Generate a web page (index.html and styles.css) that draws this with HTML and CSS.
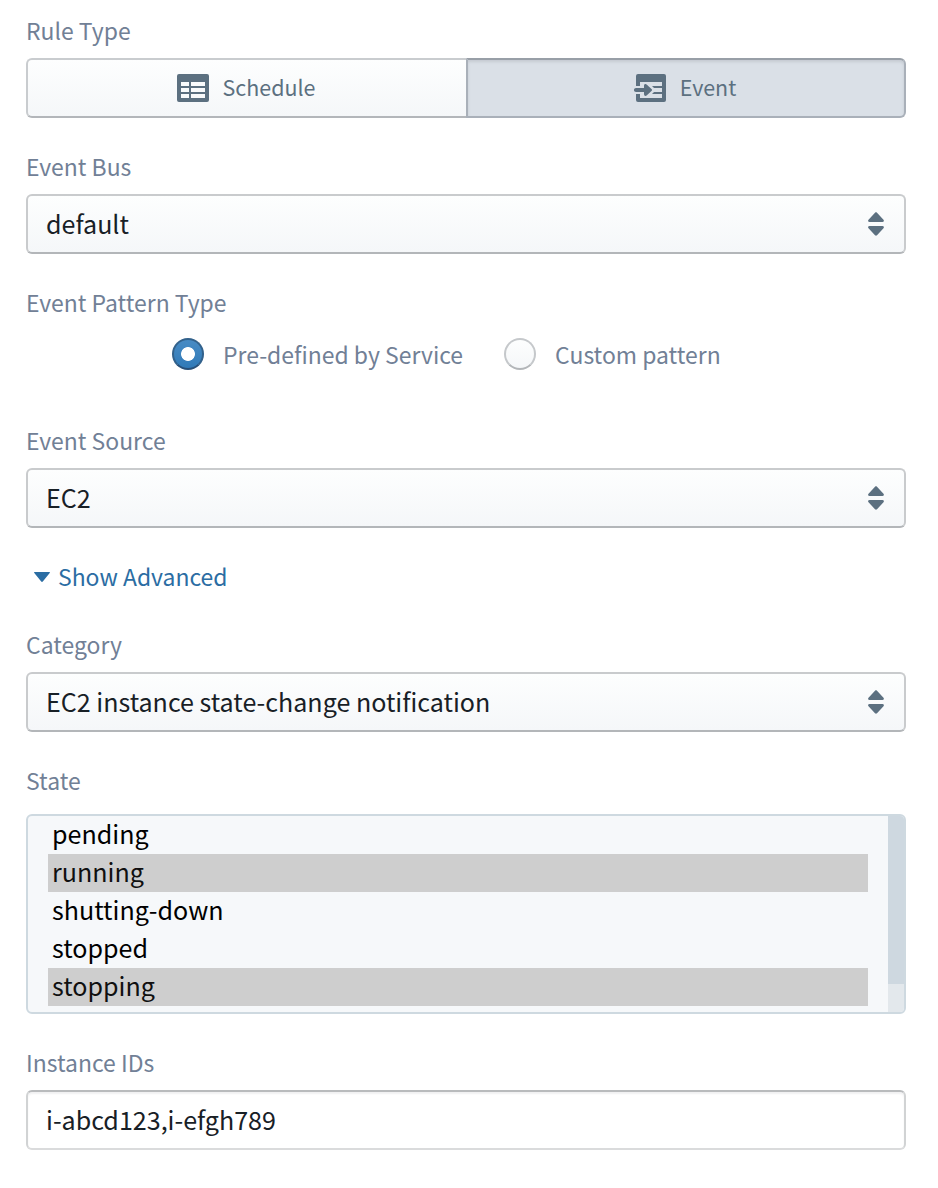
FILE: index.html
```
<!DOCTYPE html>
<html lang="en">
<head>
<meta charset="utf-8">
<title>Event rule</title>
<link rel="stylesheet" href="styles.css">
</head>
<body>
<svg class="sprite" aria-hidden="true">
  <symbol id="carets" viewBox="0 0 18 26">
    <path d="M2.500 11h13c1.300 0 1.900-1.400 1-2.300L10 1.700c-.6-.6-1.400-.6-2 0L1.500 8.700C.6 9.600 1.200 11 2.500 11zM2.500 15h13c1.300 0 1.900 1.400 1 2.300L10 24.300c-.6.6-1.400.6-2 0L1.500 17.300C.6 16.400 1.200 15 2.500 15z"/>
  </symbol>
</svg>
<form class="form">
  <section class="field">
    <div class="label">Rule Type</div>
    <div class="group">
      <div class="btn">
        <svg class="icon" viewBox="0 0 32 28"><path fill-rule="evenodd" d="M2 0h28a2 2 0 0 1 2 2v24a2 2 0 0 1-2 2H2a2 2 0 0 1-2-2V2a2 2 0 0 1 2-2zM4 8v4h8V8zM14 8v4h14V8zM4 14v4h8v-4zM14 14v4h14v-4zM4 20v4h8v-4zM14 20v4h14v-4z"/></svg>
        <span class="text">Schedule</span>
      </div>
      <div class="btn active">
        <svg class="icon" viewBox="0 0 32 28"><path d="M4 0h26a2 2 0 0 1 2 2v24a2 2 0 0 1-2 2H4a2 2 0 0 1-2-2v-6h4v4h22V8H6v4H2V2a2 2 0 0 1 2-2z"/><path d="M2 14h8v-2c0-2 1.600-2.500 2.900-1.300l4.600 4.200c.7.700.7 1.500 0 2.200l-4.600 4.200c-1.300 1.200-2.900.7-2.900-1.300V18H2c-2.700 0-2.700-4 0-4z"/><path d="M18 12H28v2h-8zM20 18H28v2H18z"/></svg>
        <span class="text">Event</span>
      </div>
    </div>
  </section>
  <section class="field">
    <div class="label">Event Bus</div>
    <div class="select"><span class="text">default</span><svg class="carets"><use href="#carets"/></svg></div>
  </section>
  <section class="field pattern">
    <div class="label">Event Pattern Type</div>
    <div class="radios">
      <div class="radio"><i class="dot on"></i><span>Pre-defined by Service</span></div>
      <div class="radio"><i class="dot"></i><span>Custom pattern</span></div>
    </div>
  </section>
  <section class="field">
    <div class="label">Event Source</div>
    <div class="select"><span class="text">EC2</span><svg class="carets"><use href="#carets"/></svg></div>
  </section>
  <div class="advanced"><svg class="tri" viewBox="0 0 16 10"><path d="M.5 0h15q.8.300.2 1L8.800 9.500q-.8.800-1.600 0L.3 1Q-.300.300.500 0z"/></svg><span>Show Advanced</span></div>
  <section class="field">
    <div class="label">Category</div>
    <div class="select"><span class="text">EC2 instance state-change notification</span><svg class="carets"><use href="#carets"/></svg></div>
  </section>
  <section class="field state">
    <div class="label">State</div>
    <div class="list">
      <div class="options">
        <div class="option">pending</div>
        <div class="option selected">running</div>
        <div class="option">shutting-down</div>
        <div class="option">stopped</div>
        <div class="option selected">stopping</div>
      </div>
      <div class="track"><div class="thumb"></div></div>
    </div>
  </section>
  <section class="field">
    <div class="label">Instance IDs</div>
    <div class="input"><span class="text">i-abcd123,i-efgh789</span></div>
  </section>
</form>
</body>
</html>
```
FILE: styles.css
```
* { box-sizing: border-box; }
body {
  margin: 0;
  background: #fff;
  font-family: "Noto Sans CJK SC", "Noto Sans", sans-serif;
  font-size: 25.070px;
  color: #182026;
}
.sprite { display: none; }
.form {
  width: 880px;
  margin-left: 26px;
  padding-top: 14px;
}
.field { margin-bottom: 32px; }
.label {
  height: 36px;
  line-height: 32px;
  margin-bottom: 8px;
  font-size: 22.950px;
  color: #718096;
}
.group { display: flex; height: 60px; }
.btn {
  width: 440px;
  display: flex;
  align-items: center;
  justify-content: center;
  gap: 14px;
  padding-right: 2px;
  font-size: 21.450px;
  color: #5c7080;
  border: 2px solid #c9cccf;
  border-bottom-color: #b3b6ba;
  border-right: 0;
  border-radius: 6px 0 0 6px;
  background: linear-gradient(#fdfefe, #f5f7f9);
}
.btn.active {
  border: 2px solid #a9b0b9;
  border-top-color: #989fa7;
  border-radius: 0 6px 6px 0;
  background: #dae0e7;
  box-shadow: inset 0 2px 3px rgba(16, 22, 26, .1);
}
.text { padding-bottom: 2px; }
.btn .text { padding-bottom: 4px; }
.icon { width: 32px; height: 28px; fill: #5c7080; }
.select, .input {
  display: flex;
  align-items: center;
  justify-content: space-between;
  height: 60px;
  padding: 0 19px 0 18px;
  border: 2px solid #c9cbcd;
  border-bottom-color: #b3b6b9;
  border-radius: 6px;
  background: linear-gradient(#fdfefe, #f5f7f9);
}
.input {
  background: #fff;
  border-color: #b9bbbd #d1d3d4 #dadbdc;
  box-shadow: inset 0 2px 2px rgba(16, 22, 26, .06);
}
.carets { width: 18px; height: 26px; fill: #5c7080; }
.pattern { margin-bottom: 50px; }
.radios { display: flex; height: 44px; padding-left: 146px; gap: 41px; }
.radio {
  display: flex;
  gap: 19px;
  height: 32px;
  margin-top: 8px;
  line-height: 32px;
  font-size: 22.950px;
  color: #718096;
}
.dot {
  width: 32px;
  height: 32px;
  border: 2px solid #c5c8cb;
  border-bottom-color: #b3b6b9;
  border-radius: 50%;
  background: linear-gradient(#fdfefe, #f5f7f9);
}
.dot.on {
  border-color: #32618b;
  border-bottom-color: #285079;
  background: radial-gradient(circle, #fff 6.500px, transparent 7.300px), linear-gradient(#488bc4, #307ab8);
}
.advanced {
  display: flex;
  gap: 8px;
  height: 36px;
  margin-bottom: 32px;
  padding-left: 8px;
  font-size: 22.950px;
  line-height: 32px;
  color: #2b6da3;
}
.tri { width: 16px; height: 10px; margin-top: 12px; fill: #2b6da3; }
.state .label { margin-bottom: 14px; }
.list {
  display: flex;
  height: 200px;
  border: 2px solid #ced9e0;
  border-radius: 6px;
  background: #f6f8fa;
  overflow: hidden;
}
.options { flex: 1; padding: 0 20px; }
.option {
  height: 38px;
  padding-left: 4px;
  line-height: 34px;
  color: #000;
}
.option.selected { background: #cecece; color: #101010; }
.track { width: 16px; background: #e3e8ec; }
.thumb { height: 168px; background: #ced8e0; }
```
